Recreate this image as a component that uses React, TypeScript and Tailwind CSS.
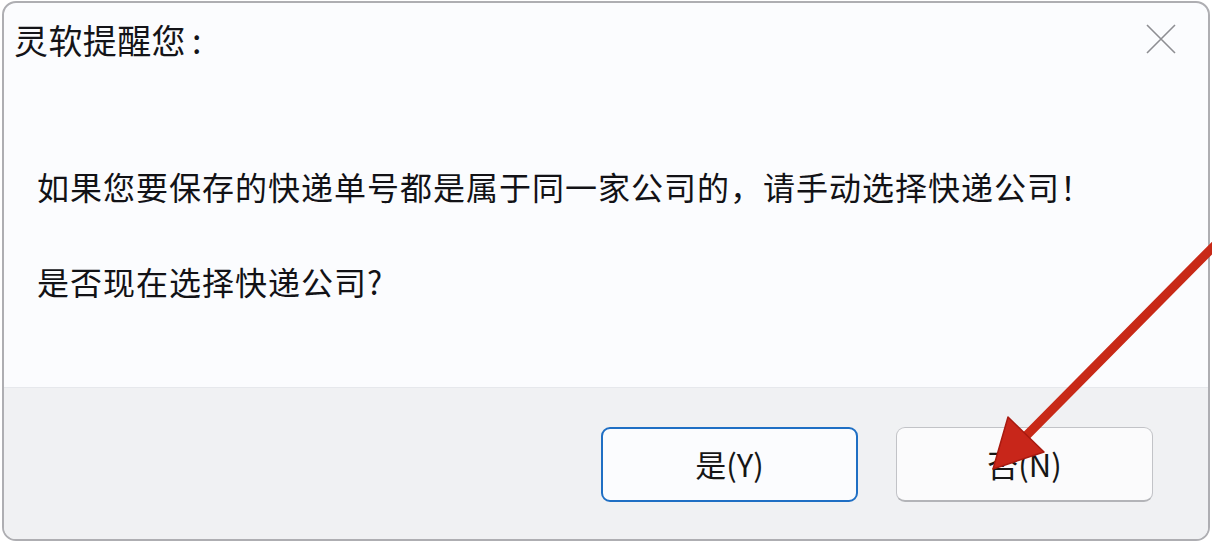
import React from 'react';

const font = { fontFamily: '"Noto Sans CJK SC", "Noto Sans", sans-serif' };

function CloseIcon() {
    return (
        <svg width="30" height="30" viewBox="0 0 30 30" className="block">
            <path d="M1 1 L29 29 M29 1 L1 29" stroke="#8e8e92" strokeWidth="1.6" fill="none" />
        </svg>
    );
}

function RedArrow() {
    return (
        <svg className="absolute left-0 top-0 pointer-events-none" width="1212" height="542" viewBox="0 0 1212 542">
            <defs>
                <linearGradient id="arrowFill" x1="0" y1="0" x2="1" y2="1">
                    <stop offset="0" stopColor="#d8321f" />
                    <stop offset="1" stopColor="#b8200f" />
                </linearGradient>
            </defs>
            <line x1="1216" y1="244" x2="1022" y2="440" stroke="url(#arrowFill)" strokeWidth="9" strokeLinecap="round" />
            <polygon points="993,469 1008,417 1044,452" fill="#c8261a" stroke="#a81a10" strokeWidth="1.5" strokeLinejoin="round" />
        </svg>
    );
}

export default function App() {
    return (
        <div className="relative w-[1212px] h-[542px] bg-white overflow-hidden" style={font}>
            <div className="ml-[2px] mt-[1px] w-[1208px] h-[540px] border-2 border-[#aeaeb2] rounded-[14px] overflow-hidden flex flex-col bg-[#fbfcfe]">
                <div className="flex items-start justify-between pl-[10px] pr-[32px] pt-[17px]">
                    <h1 className="text-[34px] leading-[40px] text-[#141418] font-normal tracking-[0.4px]">
                        灵软提醒您<span className="ml-[6px]">:</span>
                    </h1>
                    <div className="mt-[4px]">
                        <CloseIcon />
                    </div>
                </div>

                <div className="flex-1 pl-[33px] pt-[106px] text-[32px] leading-[40px] text-[#121216] tracking-[1px]">
                    <p>如果您要保存的快递单号都是属于同一家公司的，请手动选择快递公司！</p>
                    <p className="mt-[55px]">是否现在选择快递公司?</p>
                </div>

                <div className="h-[152px] shrink-0 border-t border-[#e6e8ec] bg-[#f0f1f3] flex justify-end items-start pt-[39px] pr-[55px] gap-[38px]">
                    <button className="w-[257px] h-[75px] rounded-[9px] border-[2.5px] border-[#1f6fc4] bg-[#fbfcfe] text-[31px] text-[#161616] flex items-center justify-center">
                        是(Y)
                    </button>
                    <button className="w-[257px] h-[75px] rounded-[9px] border border-[#c2c3c7] border-b-[2px] border-b-[#b3b4b8] bg-[#fbfbfc] text-[31px] text-[#161616] flex items-center justify-center">
                        否(N)
                    </button>
                </div>
            </div>
            <RedArrow />
        </div>
    );
}
